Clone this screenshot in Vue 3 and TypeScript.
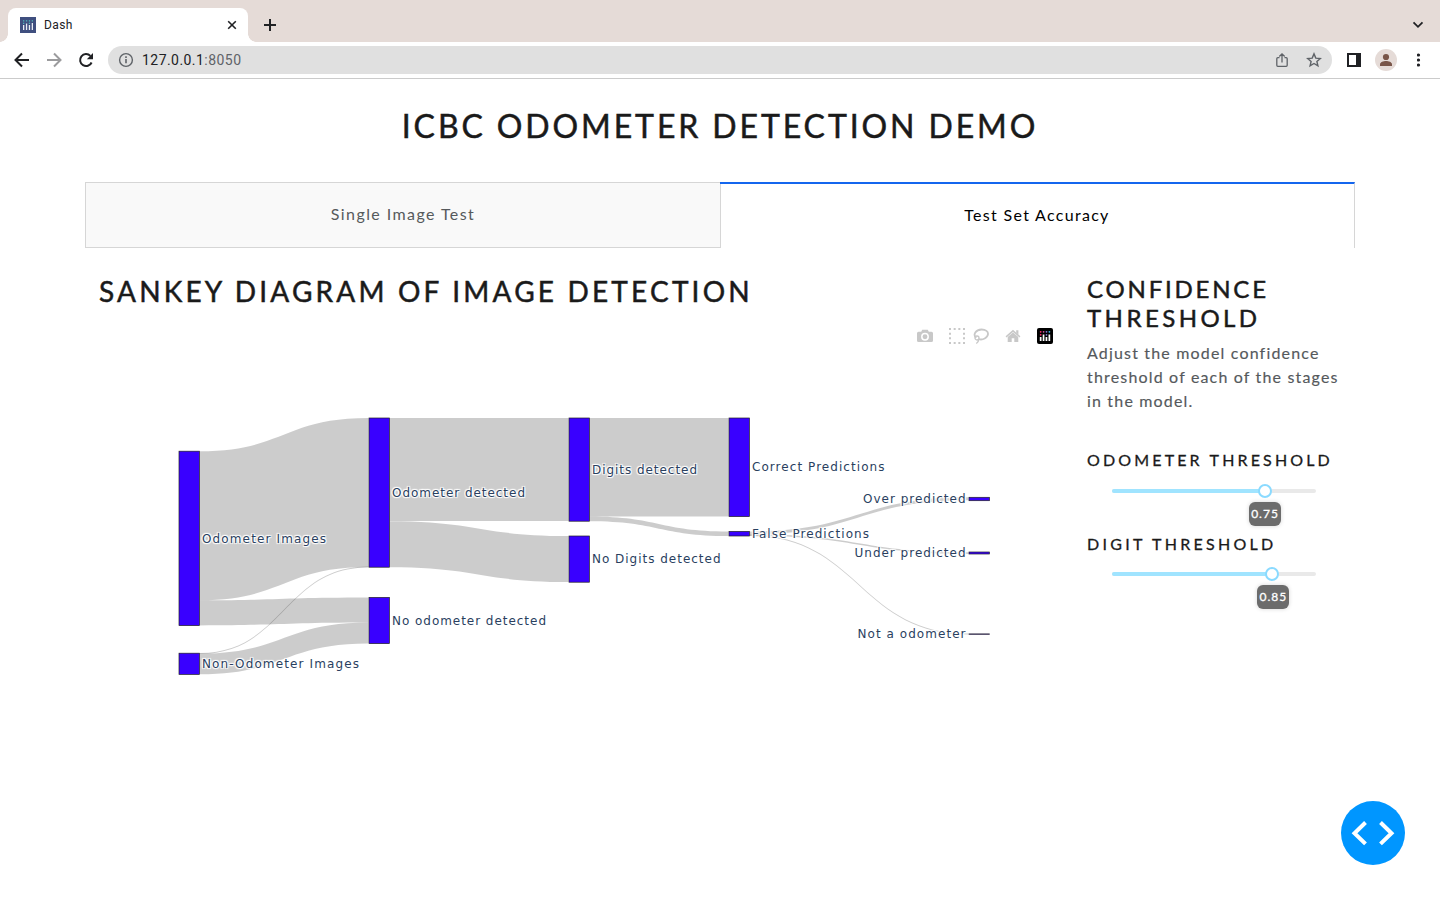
<script setup lang="ts">
interface SankeyNode {
  x: number
  y0: number
  y1: number
  label: string
  labelY: number
  labelWidth: number
  before?: boolean
}

interface SankeyLink {
  x0: number
  x1: number
  from: [number, number]
  to: [number, number]
}

const nodes: SankeyNode[] = [
  { x: 179, y0: 451.2, y1: 625.6, label: 'Odometer Images', labelY: 543, labelWidth: 124 },
  { x: 179, y0: 653.2, y1: 674.4, label: 'Non-Odometer Images', labelY: 668, labelWidth: 157 },
  { x: 369, y0: 418, y1: 567.2, label: 'Odometer detected', labelY: 497, labelWidth: 133 },
  { x: 369, y0: 597.4, y1: 643.6, label: 'No odometer detected', labelY: 625, labelWidth: 154 },
  { x: 569, y0: 418, y1: 521.2, label: 'Digits detected', labelY: 474, labelWidth: 105 },
  { x: 569, y0: 536, y1: 582.2, label: 'No Digits detected', labelY: 563, labelWidth: 128.5 },
  { x: 729, y0: 418, y1: 516.6, label: 'Correct Predictions', labelY: 471, labelWidth: 132.5 },
  { x: 729, y0: 531.4, y1: 536, label: 'False Predictions', labelY: 538, labelWidth: 117 },
  { x: 969, y0: 497.3, y1: 500.7, label: 'Over predicted', labelY: 503, labelWidth: 102.5, before: true },
  { x: 969, y0: 552, y1: 554, label: 'Under predicted', labelY: 557, labelWidth: 111, before: true },
  { x: 969, y0: 633.9, y1: 634.3, label: 'Not a odometer', labelY: 638, labelWidth: 108, before: true },
]

const links: SankeyLink[] = [
  { x0: 199.5, x1: 368.5, from: [451.2, 600.2], to: [418, 567] },
  { x0: 199.5, x1: 368.5, from: [600.2, 625.4], to: [597.6, 622.6] },
  { x0: 199.5, x1: 368.5, from: [652.9, 653.9], to: [566.5, 567.5] },
  { x0: 199.5, x1: 368.5, from: [653.6, 674.2], to: [622.6, 643.4] },
  { x0: 389.5, x1: 568.5, from: [418, 521], to: [418, 521] },
  { x0: 389.5, x1: 568.5, from: [521.2, 567.2], to: [536, 582] },
  { x0: 589.5, x1: 728.5, from: [418, 516.4], to: [418, 516.4] },
  { x0: 589.5, x1: 728.5, from: [516.4, 521.2], to: [531.4, 536] },
  { x0: 749.5, x1: 968.5, from: [531.4, 534.4], to: [497.3, 500.3] },
  { x0: 749.5, x1: 968.5, from: [534.1, 535.7], to: [552.3, 553.9] },
  { x0: 749.5, x1: 968.5, from: [535, 536.1], to: [633.5, 634.6] },
]

function ribbon(l: SankeyLink): string {
  const m = (l.x0 + l.x1) / 2
  return `M${l.x0},${l.from[0]}C${m},${l.from[0]} ${m},${l.to[0]} ${l.x1},${l.to[0]}L${l.x1},${l.to[1]}C${m},${l.to[1]} ${m},${l.from[1]} ${l.x0},${l.from[1]}Z`
}

const sliders = [
  { title: 'Odometer threshold', key: 'odo', value: '0.75', pos: 75 },
  { title: 'Digit threshold', key: 'digit', value: '0.85', pos: 78.6 },
]
</script>

<template>
  <div class="window">
    <div class="tabstrip">
      <div class="browser-tab">
        <svg class="favicon" width="16" height="16" viewBox="0 0 16 16">
          <rect width="16" height="16" fill="#3f4f7f" />
          <g fill="#e8ecf4"><rect x="3" y="8" width="1.3" height="5" /><rect x="5.9" y="6.5" width="1.3" height="6.5" /><rect x="8.8" y="8" width="1.3" height="5" /><rect x="11.7" y="6" width="1.3" height="7" /></g>
          <g fill="#4fb3b8"><rect x="3" y="3.2" width="1.3" height="1.3" /><rect x="5.9" y="3.2" width="1.3" height="1.3" /><rect x="8.8" y="3.2" width="1.3" height="1.3" /><rect x="11.7" y="3.2" width="1.3" height="1.3" /><rect x="3" y="5.7" width="1.3" height="1.3" /><rect x="8.8" y="5.7" width="1.3" height="1.3" /></g>
        </svg>
        <span class="tab-name">Dash</span>
        <svg class="close" width="10" height="10" viewBox="0 0 10 10"><path d="M1.2 1.2 8.8 8.8M8.8 1.2 1.2 8.8" stroke="#202124" stroke-width="1.6" /></svg>
      </div>
      <svg class="new-tab" width="14" height="14" viewBox="0 0 14 14"><path d="M7 1v12M1 7h12" stroke="#202124" stroke-width="2" /></svg>
      <svg class="chevron" width="12" height="8" viewBox="0 0 12 8"><path d="M1.5 1.3 6 5.8l4.500-4.500" fill="none" stroke="#202124" stroke-width="1.800" /></svg>
    </div>

    <div class="toolbar">
      <svg class="nav" width="20" height="20" viewBox="0 0 20 20"><path d="M17 10H4M10 3.500 3.500 10l6.500 6.500" fill="none" stroke="#202124" stroke-width="2" /></svg>
      <svg class="nav" width="20" height="20" viewBox="0 0 20 20"><path d="M3 10h13M10 3.500l6.500 6.500-6.500 6.500" fill="none" stroke="#9b9b9d" stroke-width="2" /></svg>
      <svg class="nav" width="20" height="20" viewBox="0 0 20 20"><path d="M15.600 12.500A6 6 0 1 1 14.400 5.900" fill="none" stroke="#202124" stroke-width="2" /><path d="M17 3v6.200h-6.200z" fill="#202124" /></svg>
      <div class="omnibox">
        <svg width="16" height="16" viewBox="0 0 16 16"><circle cx="8" cy="8" r="6.400" fill="none" stroke="#5f6368" stroke-width="1.400" /><path d="M8 7.100v4.200M8 4.300v1.600" stroke="#5f6368" stroke-width="1.600" /></svg>
        <span class="url">127.0.0.1<span class="port">:8050</span></span>
        <svg class="share" width="16" height="16" viewBox="0 0 16 16"><path d="M5.500 5.700H3.800a1 1 0 0 0-1 1v6.600a1 1 0 0 0 1 1h8.400a1 1 0 0 0 1-1V6.700a1 1 0 0 0-1-1h-1.700M8 10.500V2M5.300 4.500 8 1.800l2.700 2.700" fill="none" stroke="#5f6368" stroke-width="1.300" /></svg>
        <svg class="star" width="16" height="16" viewBox="0 0 16 16"><path d="M8 1.900 9.800 6.100l4.500.4-3.400 3 1 4.400L8 11.500l-3.900 2.400 1-4.400-3.400-3 4.500-.4z" fill="none" stroke="#5f6368" stroke-width="1.400" /></svg>
      </div>
      <svg class="panel-icon" width="14" height="14" viewBox="0 0 14 14"><path d="M0 0h14v14H0zM2 2v10h7V2z" fill="#202124" fill-rule="evenodd" /></svg>
      <svg class="avatar" width="22" height="22" viewBox="0 0 22 22"><circle cx="11" cy="11" r="11" fill="#e5dbd7" /><circle cx="11" cy="8" r="3.100" fill="#795548" /><path d="M5 17v-1.700c0-2.100 3.500-3.300 6-3.300s6 1.200 6 3.300V17z" fill="#795548" /></svg>
      <svg class="dots" width="4" height="14" viewBox="0 0 4 14" fill="#202124"><circle cx="1.500" cy="2" r="1.600" /><circle cx="1.500" cy="7" r="1.600" /><circle cx="1.500" cy="12" r="1.600" /></svg>
    </div>

    <main class="page">
      <h1>ICBC Odometer Detection Demo</h1>
      <div class="tabs">
        <div class="tab">Single Image Test</div>
        <div class="tab active">Test Set Accuracy</div>
      </div>
      <div class="content">
        <section class="diagram">
          <h2>Sankey Diagram of Image Detection</h2>
          <div class="modebar">
            <svg width="16" height="16" viewBox="0 0 16 16"><path d="M5.200 1.800h5.600l1 2H14.500A1.500 1.500 0 0 1 16 5.300v7.200a1.500 1.500 0 0 1-1.500 1.500h-13A1.500 1.500 0 0 1 0 12.500V5.300a1.500 1.500 0 0 1 1.500-1.500H4.200z" fill="#c8c8c8" /><circle cx="8" cy="8.700" r="3.200" fill="none" stroke="#fff" stroke-width="1.500" /></svg>
            <svg class="gap" width="16" height="16" viewBox="0 0 16 16"><path d="M0 1h16M0 15h16" stroke="#c8c8c8" stroke-width="2" stroke-dasharray="2 2.667" /><path d="M1 0v16M15 0v16" stroke="#c8c8c8" stroke-width="2" stroke-dasharray="2 2.667" /></svg>
            <svg class="lasso" width="16" height="16" viewBox="0 0 16 16"><path d="M3.200 9.800C-.5 6.500 2.700 1.600 8.600 1.500c4.200 0 6.700 2.200 6.400 4.700-.4 3.700-5.300 6.200-9.400 4.900" fill="none" stroke="#c8c8c8" stroke-width="1.800" /><circle cx="4" cy="10" r="2" fill="none" stroke="#c8c8c8" stroke-width="1.300" /><path d="M5.400 11.200C5.800 13 5 14.500 3.300 15.500" fill="none" stroke="#c8c8c8" stroke-width="1.300" /></svg>
            <svg class="gap" width="16" height="16" viewBox="0 0 16 16" fill="#c8c8c8"><path d="M8 4.600 13.300 9V14H9.300V10.300H6.700V14H2.700V9z" /><path d="M.6 8.300 8 1.800l7.400 6.500-.9 1.100L8 3.900 1.500 9.400z" /><path d="M11.200 2.300h2.200v4.400l-2.200-1.900z" /></svg>
            <svg class="gap" width="16" height="16" viewBox="0 0 16 16"><rect width="16" height="16" rx="2" /><g fill="#fff"><rect x="2.800" y="9" width="1.700" height="4" /><rect x="5.700" y="6.500" width="1.700" height="6.500" /><rect x="8.600" y="9" width="1.700" height="4" /><rect x="11.500" y="6.500" width="1.700" height="6.500" /></g><g><circle cx="3.700" cy="3.800" r=".9" fill="#ff2c6d" /><circle cx="3.700" cy="6.800" r=".9" fill="#ff2c6d" /><circle cx="6.600" cy="3.800" r=".9" fill="#d255a1" /><circle cx="9.500" cy="3.800" r=".9" fill="#8a78d8" /><circle cx="9.500" cy="6.800" r=".9" fill="#8a78d8" /><circle cx="12.400" cy="3.800" r=".9" fill="#39b9e8" /></g></svg>
          </div>
          <svg class="sankey" width="960" height="320" viewBox="99 380 960 320">
            <path v-for="(l, i) in links" :key="i" :d="ribbon(l)" class="link" />
            <g v-for="n in nodes" :key="n.label">
              <rect :x="n.x" :y="n.y0" width="20.400" :height="n.y1 - n.y0" class="node" />
              <text
                :x="n.before ? 965.5 - n.labelWidth : n.x + 23"
                :y="n.labelY"
                :textLength="n.labelWidth"
                class="label"
              >{{ n.label }}</text>
            </g>
          </svg>
        </section>

        <aside class="controls">
          <h3><span class="first">Confidence</span><br /><span class="second">Threshold</span></h3>
          <p>Adjust the model confidence<br />threshold of each of the stages<br />in the model.</p>
          <div v-for="s in sliders" :key="s.key" class="control" :class="s.key">
            <h5>{{ s.title }}</h5>
            <div class="slider">
              <div class="fill" :style="{ width: s.pos + '%' }"></div>
              <div class="handle" :style="{ left: s.pos + '%' }"></div>
              <div class="tip" :style="{ left: s.pos + '%' }">{{ s.value }}</div>
            </div>
          </div>
        </aside>
      </div>
    </main>

    <div class="debug-button">
      <svg width="64" height="64" viewBox="0 0 64 64"><path d="M24.500 21.500 13.500 32.200l11 10.700M39.500 21.500l11 10.700-11 10.700" fill="none" stroke="#fff" stroke-width="4" /></svg>
    </div>
  </div>
</template>

<style>
body { margin: 0; background: #fff; overflow: hidden; }
</style>

<style scoped>
* { box-sizing: border-box; }
.window { position: relative; width: 1440px; height: 900px; overflow: hidden; background: #fff; font-family: Lato, "Open Sans", sans-serif; }
svg { display: block; flex: none; }

.tabstrip { display: flex; align-items: center; height: 42px; padding: 8px 16px 0 8px; background: #e5dbd7; }
.browser-tab { position: relative; display: flex; align-items: center; width: 240px; height: 34px; padding: 0 11px 0 12px; border-radius: 8px 8px 0 0; background: #fff; }
.browser-tab::before, .browser-tab::after { content: ""; position: absolute; bottom: 0; width: 8px; height: 8px; }
.browser-tab::before { left: -8px; background: radial-gradient(circle at 0 0, transparent 7.5px, #fff 8px); }
.browser-tab::after { right: -8px; background: radial-gradient(circle at 100% 0, transparent 7.5px, #fff 8px); }
.tab-name { margin-left: 8px; font: 12px Roboto, sans-serif; letter-spacing: 0.4px; color: #202124; }
.close { margin-left: auto; }
.new-tab { margin-left: 15px; }
.chevron { margin-left: auto; }

.toolbar { display: flex; align-items: center; height: 37px; padding: 0 19px 0 12px; border-bottom: 1px solid #cbcbcb; }
.nav { margin-right: 12px; }
.omnibox { display: flex; align-items: center; width: 1224px; height: 28px; padding: 0 10px; border-radius: 14px; background: #e0e0e0; }
.url { margin-left: 8px; font: 14px Roboto, sans-serif; letter-spacing: 0.45px; color: #202124; }
.port { color: #5f6368; }
.share { margin-left: auto; }
.star { margin-left: 16px; }
.panel-icon { margin-left: 15px; }
.avatar { margin-left: 14px; }
.dots { margin-left: auto; }

.page { width: 1270px; margin: 0 auto; }
h1, h2, h3, h5 { margin: 0; font-weight: 400; text-transform: uppercase; color: #1a1a1a; white-space: nowrap; -webkit-text-stroke: 0.5px currentColor; }
h1 { height: 103px; padding-top: 27px; font-size: 32px; line-height: 40px; letter-spacing: 2.9px; text-align: center; }

.tabs { display: flex; height: 66px; }
.tab { display: flex; align-items: center; justify-content: center; width: 636px; padding-bottom: 3px; border: 1px solid #d6d6d6; background: #f9f9f9; color: #55595c; font-size: 16px; letter-spacing: 1.42px; }
.tab.active { width: 635px; margin-left: -1px; border-top: 2px solid #1466ee; border-left: 0; border-bottom: 0; background: transparent; color: #000; letter-spacing: 1.3px; }

.content { display: flex; padding: 0 14px; }
.diagram { width: 988px; padding-top: 26px; }
h2 { font-size: 28px; line-height: 34px; letter-spacing: 3.19px; }
.modebar { display: flex; justify-content: flex-end; width: 954px; margin-top: 20px; }
.gap { margin-left: 16px; }
.lasso { margin-left: 8px; }
.sankey { margin-top: 36px; }
.link { fill: rgba(0, 0, 0, 0.2); }
.node { fill: #3900ff; stroke: #222; stroke-width: 0.7px; }
.label { font: 12px "DejaVu Sans", Verdana, sans-serif; fill: #2a3f5f; text-shadow: #fff -1px -1px 1px, #fff 1px -1px 1px, #fff 1px 1px 1px, #fff -1px 1px 1px, #fff 0 0 2px; }

.controls { width: 254px; padding-top: 26px; }
h3 { font-size: 24px; line-height: 29px; }
.first { letter-spacing: 2.8px; }
.second { letter-spacing: 3.45px; }
p { margin: 9px 0 0; font-size: 16px; line-height: 24px; letter-spacing: 1.17px; color: #55595c; white-space: nowrap; -webkit-text-stroke: 0.15px currentColor; }
.control { height: 84px; }
.control.odo { margin-top: 37px; }
h5 { font-size: 16px; line-height: 20px; letter-spacing: 3.15px; -webkit-text-stroke: 0.3px currentColor; }
.digit h5 { letter-spacing: 3.27px; }
.slider { position: relative; width: 204px; height: 4px; margin: 19px 0 0 25px; border-radius: 2px; background: #e9e9e9; }
.digit .slider { margin-top: 18px; }
.fill { height: 4px; border-radius: 2px; background: #a0e4ff; }
.handle { position: absolute; top: -5px; width: 14px; height: 14px; margin-left: -7px; border: 2px solid #8adaff; border-radius: 50%; background: #fff; }
.tip { position: absolute; top: 13px; width: 32px; height: 24px; margin-left: -16px; border-radius: 6px; background: #6c6c6c; box-shadow: 0 0 4px rgba(0, 0, 0, 0.17); color: #fff; font-size: 12px; line-height: 24px; letter-spacing: 1px; text-align: center; -webkit-text-stroke: 0.3px currentColor; }
.digit .tip { margin-left: -15px; }

.debug-button { position: absolute; left: 1341px; top: 801px; width: 64px; height: 64px; border-radius: 50%; background: #0096ff; }
</style>
